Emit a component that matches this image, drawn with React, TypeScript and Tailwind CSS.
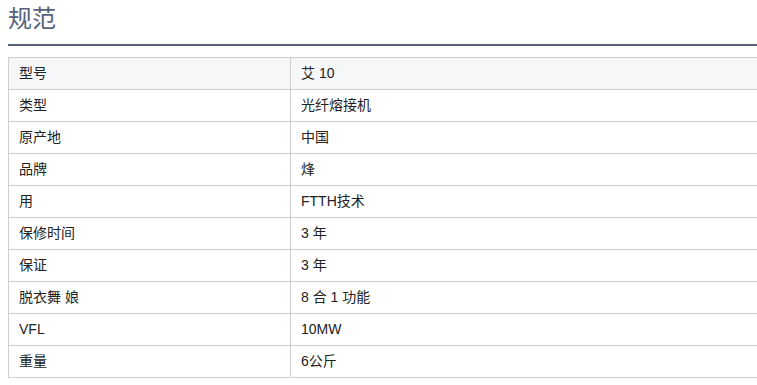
import React from "react";

const rows: [string, string][] = [
  ["型号", "艾 10"],
  ["类型", "光纤熔接机"],
  ["原产地", "中国"],
  ["品牌", "烽"],
  ["用", "FTTH技术"],
  ["保修时间", "3 年"],
  ["保证", "3 年"],
  ["脱衣舞 娘", "8 合 1 功能"],
  ["VFL", "10MW"],
  ["重量", "6公斤"],
];

export default function App() {
  return (
    <div
      className="w-[757px] h-[385px] overflow-hidden bg-white pl-2"
      style={{ fontFamily: '"Liberation Sans", Inter, "Noto Sans CJK SC", sans-serif' }}
    >
      <div className="w-[760px]">
        <h2 className="pt-[3px] h-[41px] text-[24px] leading-[32px] text-[#55627a] border-b-2 border-[#55627a] box-content">
          规范
        </h2>
        <table className="mt-[11px] w-[760px] border-collapse text-[14px] text-[#222]">
          <tbody>
            {rows.map(([k, v], i) => (
              <tr key={i} className={i === 0 ? "bg-[#f6f7f9]" : "bg-white"}>
                <td className="w-[282px] h-[32px] border border-[#cfcfcf] pl-[10px] py-0 align-middle">{k}</td>
                <td className="h-[32px] border border-[#cfcfcf] pl-[10px] py-0 align-middle">{v}</td>
              </tr>
            ))}
          </tbody>
        </table>
      </div>
    </div>
  );
}
